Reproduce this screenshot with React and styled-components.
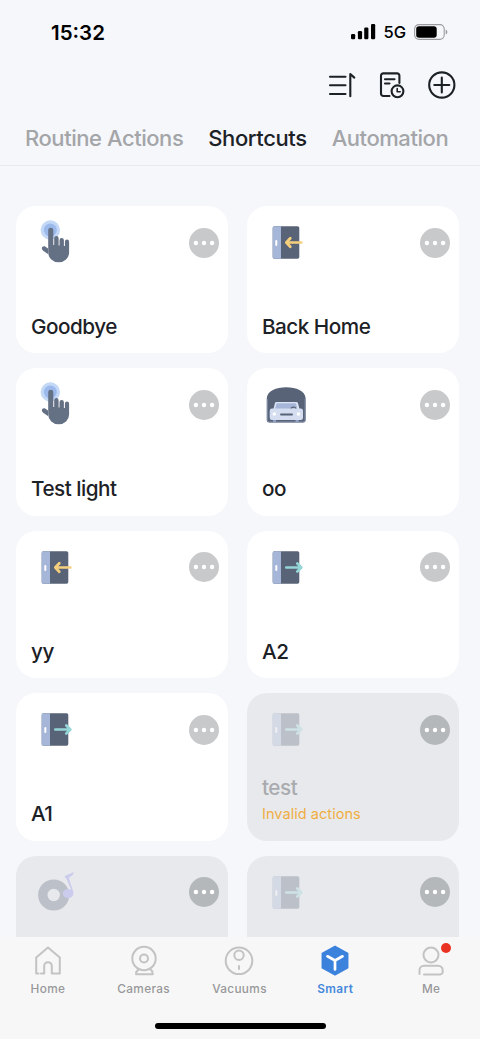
import React from 'react'
import styled, { createGlobalStyle } from 'styled-components'

const GlobalStyle = createGlobalStyle`
  * {
    box-sizing: border-box;
  }

  body {
    margin: 0;
    background: #f5f7fb;
    font-family: Inter, 'Liberation Sans', sans-serif;
    color: #1c2126;
  }
`

const TapIcon = () => (
  <svg width="48" height="48" viewBox="0 0 48 48" fill="none">
    <circle cx="19.3" cy="14" r="9.7" fill="#c3d8f6" />
    <circle cx="19.3" cy="14" r="6.5" fill="#9cb9ec" />
    <path d="M17.2 36.5V14.2a2.5 2.5 0 0 1 5.1 0V29h.9v-6.7a2.2 2.2 0 0 1 4.4 0V29.5h.9v-5.3a2.2 2.2 0 0 1 4.4 0V30h1v-4.3a2.1 2.1 0 0 1 4.2 0V36.5a10.4 9.8 0 0 1-20.9 0Z" fill="#647084" />
    <path d="M14.5 30.7 17 32.5V38c-2-1.5-4.8-2.8-6-4.8-.8-2 1.5-3.7 3.5-2.5Z" fill="#647084" />
  </svg>
)

const DoorIcon = ({ out }) => (
  <svg width="48" height="48" viewBox="0 0 48 48" fill="none">
    <rect x="10.7" y="10.2" width="26.6" height="32.6" rx="1.8" fill="#586378" />
    <path d="M12.3 10.2H19v32.6h-6.7a1.6 1.6 0 0 1-1.6-1.6V11.8a1.6 1.6 0 0 1 1.6-1.6Z" fill="#a5b6d8" />
    <rect x="13.3" y="24" width="2" height="6" rx="1" fill="#fff" />
    {out ? (
      <path d="M24.3 26.5h14.7M35.3 22.5l4 4-4 4" stroke="#94d5d6" strokeWidth="2.7" strokeLinecap="round" strokeLinejoin="round" />
    ) : (
      <path d="M39.3 26.5H24.5M28.3 22.3l-4 4.2 4 4.2" stroke="#f6cf7d" strokeWidth="2.7" strokeLinecap="round" strokeLinejoin="round" />
    )}
  </svg>
)

const GarageIcon = () => (
  <svg width="48" height="48" viewBox="0 0 48 48" fill="none">
    <path d="M4.8 20C5.5 13 14 9.3 24.2 9.3S43 13 43.6 20v22a2.5 2.5 0 0 1-2.5 2.5H7.3A2.5 2.5 0 0 1 4.8 42Z" fill="#586378" />
    <path d="M5.3 21v21.2A2 2 0 0 0 7.3 44h33.8a2 2 0 0 0 2-1.8V21" stroke="#8591ac" strokeWidth="1" />
    <path d="M14.5 24h19.8a1.8 1.8 0 0 1 1.7 1.3L37.5 31h-26l1.4-5.7A1.7 1.7 0 0 1 14.5 24Z" fill="#dce5f5" />
    <path d="M14.6 25.3h19.3l1.5 5.7H13Z" fill="#a5b6d8" />
    <path d="M29 31c0-2.6 4.8-2.6 4.8 0" stroke="#586378" strokeWidth="1.3" />
    <rect x="11" y="41" width="3.2" height="3" fill="#8fa0c6" />
    <rect x="33.5" y="41" width="3.2" height="3" fill="#8fa0c6" />
    <rect x="7.7" y="30.5" width="33.3" height="11.5" rx="2.2" fill="#d4def0" />
    <circle cx="12.3" cy="36" r="1.8" fill="#fff" />
    <circle cx="36.5" cy="36" r="1.8" fill="#fff" />
    <path d="M19 36.5h11" stroke="#586378" strokeWidth="1.9" strokeLinecap="round" />
  </svg>
)

const MusicIcon = () => (
  <svg width="48" height="48" viewBox="0 0 48 48" fill="none">
    <circle cx="22.7" cy="29" r="10.9" stroke="#586378" strokeWidth="9.4" />
    <path d="M37.2 23c1.3 0 2.300.3 3 .7L35.200 12.300c-.9-.6-1.400-1.200-1.700-1.800 3-2.200 5.500-2.500 9.300-4.500-.3 3.300-3 4-5 6L42.400 26c.7 3.500-2 6.200-5.200 6.200a5.400 4.600 0 0 1 0-9.200Z" fill="#8c8cf0" />
  </svg>
)

const icons = {
  tap: <TapIcon />,
  in: <DoorIcon />,
  out: <DoorIcon out />,
  garage: <GarageIcon />,
  music: <MusicIcon />,
}

const shortcuts = [
  { icon: 'tap', name: 'Goodbye' },
  { icon: 'in', name: 'Back Home' },
  { icon: 'tap', name: 'Test light' },
  { icon: 'garage', name: 'oo' },
  { icon: 'in', name: 'yy' },
  { icon: 'out', name: 'A2' },
  { icon: 'out', name: 'A1' },
  { icon: 'out', name: 'test', error: 'Invalid actions', disabled: true },
  { icon: 'music', disabled: true },
  { icon: 'out', disabled: true },
]

const navItems = [
  {
    label: 'Home',
    icon: (
      <path d="M6.5 31.5H4.2V15.5L16 5.5l11.800 10v16H19.800V24a3.800 3.800 0 0 0-7.600 0v7.500H9" />
    ),
  },
  {
    label: 'Cameras',
    icon: (
      <>
        <circle cx="16" cy="16.5" r="11.7" />
        <circle cx="16" cy="16.5" r="4" />
        <path d="M10.5 27.5 8 30.500M8 32.300h16.800l-.7-3.300-2-1.700" />
      </>
    ),
  },
  {
    label: 'Vacuums',
    icon: (
      <>
        <circle cx="16" cy="18.8" r="13.3" />
        <circle cx="16" cy="13.3" r="4.7" />
        <path d="M16 24v3" />
      </>
    ),
  },
  {
    label: 'Smart',
    active: true,
    icon: (
      <>
        <path d="M16 4.3 28.7 11.3v14.5L16 32.8 3.3 25.8V11.3Z" fill="#3b82dd" stroke="#3b82dd" strokeWidth="1.5" />
        <path d="M8.500 14.300 16 18.500l7.500-4.200M16 18.500v9" stroke="#fff" strokeWidth="2.7" />
      </>
    ),
  },
  {
    label: 'Me',
    badge: true,
    icon: (
      <>
        <circle cx="16" cy="13" r="7.5" />
        <path d="M4.500 32v-4a4.500 4.500 0 0 1 4.500-4.300h14a4.700 4.700 0 0 1 4.700 4.700v1.500a2.500 2.500 0 0 1-2.500 2.500H9" />
      </>
    ),
  },
]

const App = () => {
  return (
    <Screen>
      <GlobalStyle />
      <StatusBar>
        <Time>15:32</Time>
        <StatusIcons>
          <svg width="25" height="16" viewBox="0 0 25 16" fill="#000">
            <rect x="0" y="10" width="4.2" height="5.3" rx="1.2" />
            <rect x="6.9" y="7" width="4.2" height="8.3" rx="1.2" />
            <rect x="13.2" y="3.5" width="4.2" height="11.8" rx="1.2" />
            <rect x="20" y="0" width="4.2" height="15.3" rx="1.2" />
          </svg>
          <Network>5G</Network>
          <svg width="35" height="16" viewBox="0 0 35 16" fill="none">
            <rect x=".6" y=".6" width="29.6" height="14.8" rx="4.3" stroke="#9b9ca0" strokeWidth="1.1" />
            <rect x="2.2" y="2.2" width="20.5" height="11.6" rx="2.8" fill="#000" />
            <path d="M31.700 5.500c2.200.8 2.200 4.200 0 5Z" fill="#9b9ca0" />
          </svg>
        </StatusIcons>
      </StatusBar>

      <Toolbar>
        <svg width="28" height="28" viewBox="0 0 28 28">
          <path d="M2 5.800h15.500M2 14.300h15.500M2 23h15.500M22.300 25.300V3l4 3.600" />
        </svg>
        <svg width="28" height="28" viewBox="0 0 28 28">
          <path d="M11.500 25H5.300a2.300 2.300 0 0 1-2.300-2.300v-18A2.300 2.300 0 0 1 5.300 2.400h13.800a2.300 2.300 0 0 1 2.300 2.300V12M7 8.200h9.500M7 12.500h4.500" />
          <circle cx="19.5" cy="20.3" r="5.9" />
          <path d="M19.200 17.500v3.200h3" strokeWidth="1.6" />
        </svg>
        <svg width="28" height="28" viewBox="0 0 28 28">
          <circle cx="13.8" cy="14" r="12.6" />
          <path d="M6.300 14h15M13.800 6.500v15" />
        </svg>
      </Toolbar>

      <Tabs>
        <Tab>Routine Actions</Tab>
        <Tab $active>Shortcuts</Tab>
        <Tab>Automation</Tab>
      </Tabs>

      <Grid>
        {shortcuts.map((item, i) => (
          <Card key={i} $disabled={item.disabled}>
            <CardTop>
              <CardIcon $disabled={item.disabled}>{icons[item.icon]}</CardIcon>
              <MoreButton $disabled={item.disabled}>
                <svg width="30" height="30" viewBox="0 0 30 30" fill="#fff">
                  <circle cx="6.9" cy="15" r="2.2" />
                  <circle cx="15" cy="15" r="2.2" />
                  <circle cx="23.1" cy="15" r="2.2" />
                </svg>
              </MoreButton>
            </CardTop>
            <CardText $error={item.error}>
              <CardName $disabled={item.disabled}>{item.name}</CardName>
              {item.error && <CardError>{item.error}</CardError>}
            </CardText>
          </Card>
        ))}
      </Grid>

      <BottomBar>
        <Nav>
          {navItems.map((item) => (
            <NavItem key={item.label} $active={item.active}>
              <svg width="32" height="36" viewBox="0 0 32 36">
                {item.icon}
              </svg>
              {item.badge && <Badge />}
              <span>{item.label}</span>
            </NavItem>
          ))}
        </Nav>
        <HomeIndicator />
      </BottomBar>
    </Screen>
  )
}

export default App

const Screen = styled.div`
  display: flex;
  flex-direction: column;
  width: 480px;
  height: 1039px;
  overflow: hidden;
  background: #f5f7fb;
`

const StatusBar = styled.div`
  display: flex;
  flex-shrink: 0;
  align-items: center;
  justify-content: space-between;
  height: 64px;
  padding: 0 31px 0 51px;
`

const Time = styled.div`
  font-size: 20.5px;
  font-weight: 600;
  color: #000;
`

const StatusIcons = styled.div`
  display: flex;
  align-items: center;
`

const Network = styled.span`
  margin: 0 8px 0 7px;
  font-size: 16.5px;
  font-weight: 500;
  color: #000;
`

const Toolbar = styled.div`
  display: flex;
  flex-shrink: 0;
  align-items: center;
  justify-content: flex-end;
  gap: 22px;
  height: 42px;
  padding: 0 24px;

  svg {
    fill: none;
    stroke: #1c2126;
    stroke-width: 2.1;
    stroke-linecap: round;
    stroke-linejoin: round;
  }
`

const Tabs = styled.div`
  display: flex;
  flex-shrink: 0;
  align-items: center;
  gap: 25px;
  height: 60px;
  padding: 5px 0 0 25px;
  border-bottom: 1px solid #e9eaee;
`

const Tab = styled.div`
  font-size: 22px;
  font-weight: 500;
  letter-spacing: ${(p) => (p.$active ? '-0.4px' : '-0.45px')};
  color: ${(p) => (p.$active ? '#1c2126' : '#a4a5a8')};
  white-space: nowrap;
`

const Grid = styled.div`
  display: grid;
  flex: 1;
  grid-template-columns: 212px 212px;
  grid-auto-rows: 147.4px;
  gap: 15px 19px;
  min-height: 0;
  padding: 40px 21px 0 16px;
  overflow: hidden;
`

const Card = styled.div`
  display: flex;
  flex-direction: column;
  justify-content: space-between;
  padding: 10px 9px 12px 15px;
  border-radius: 20px;
  background: ${(p) => (p.$disabled ? '#e8e9ec' : '#fff')};
`

const CardTop = styled.div`
  display: flex;
  align-items: flex-start;
  justify-content: space-between;
`

const CardIcon = styled.div`
  height: 48px;
  opacity: ${(p) => (p.$disabled ? 0.3 : 1)};
`

const MoreButton = styled.div`
  display: flex;
  width: 30px;
  height: 30px;
  margin-top: 11.5px;
  border-radius: 50%;
  background: ${(p) => (p.$disabled ? '#b5b8ba' : '#c8c9cb')};
`

const CardText = styled.div`
  display: flex;
  flex-direction: column;
  padding-bottom: ${(p) => (p.$error ? '3px' : '0.5px')};
`

const CardName = styled.div`
  font-size: 20.7px;
  font-weight: 500;
  line-height: 29px;
  letter-spacing: -0.5px;
  color: ${(p) => (p.$disabled ? '#a9abae' : '#1c2126')};
`

const CardError = styled.div`
  font-size: 14.5px;
  line-height: 24px;
  letter-spacing: 0.05px;
  color: #f0ae42;
`

const BottomBar = styled.div`
  display: flex;
  flex-direction: column;
  flex-shrink: 0;
  align-items: center;
  justify-content: space-between;
  height: 102px;
  padding-bottom: 10px;
  background: #f7f7f7;
`

const Nav = styled.div`
  display: flex;
  width: 100%;
  padding-right: 1px;
`

const NavItem = styled.div`
  position: relative;
  display: flex;
  flex: 1;
  flex-direction: column;
  align-items: center;
  padding-top: 5px;
  font-size: 11.8px;
  font-weight: ${(p) => (p.$active ? 600 : 500)};
  line-height: 22px;
  letter-spacing: 0.35px;
  color: ${(p) => (p.$active ? '#4488dc' : '#97989a')};

  svg {
    fill: none;
    stroke: #c3c3c4;
    stroke-width: 2;
    stroke-linecap: round;
    stroke-linejoin: round;
  }
`

const Badge = styled.span`
  position: absolute;
  top: 6px;
  left: 58px;
  width: 10px;
  height: 10px;
  border-radius: 50%;
  background: #ea3223;
`

const HomeIndicator = styled.div`
  width: 171px;
  height: 6px;
  border-radius: 3px;
  background: #000;
`
